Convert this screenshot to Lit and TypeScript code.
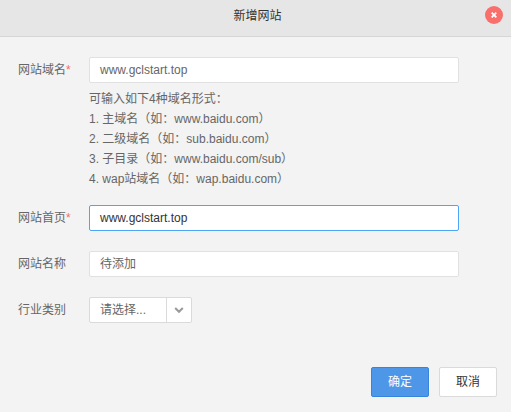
import { LitElement, html, css, nothing } from "lit";
import { customElement, property } from "lit/decorators.js";

@customElement("form-row")
class FormRow extends LitElement {
  @property() label = "";
  @property({ type: Boolean }) required = false;

  static styles = css`
    :host { display: flex; align-items: flex-start; }
    .label { flex: none; width: 71px; line-height: 26px; color: #666; white-space: nowrap; }
    .star { color: #f56c6c; }
    .control { flex: none; width: 370px; }
  `;

  render() {
    return html`
      <div class="label">${this.label}${this.required ? html`<span class="star">*</span>` : nothing}</div>
      <div class="control"><slot></slot></div>
    `;
  }
}

@customElement("app-root")
class AppRoot extends LitElement {
  static styles = css`
    :host {
      display: flex;
      flex-direction: column;
      box-sizing: border-box;
      height: 412px;
      background: #f3f3f3;
      font: 12px/20px "Liberation Sans", "Noto Sans CJK SC", sans-serif;
      color: #666;
      overflow: hidden;
    }
    * { box-sizing: border-box; }
    .header {
      position: relative;
      flex: none;
      height: 37px;
      padding-top: 6px;
      background: #e6e6e6;
      border-bottom: 1px solid #d6d6d6;
      color: #333;
      text-align: center;
      padding-right: -4px;
      text-indent: 4px;
    }
    .close {
      position: absolute;
      top: 6px;
      right: 8px;
      width: 18px;
      height: 18px;
      padding: 0;
      border: 0;
      background: none;
    }
    svg { display: block; }
    .form { flex: 1; padding: 20px 0 0 18px; }
    form-row + form-row { margin-top: 20px; }
    .input {
      width: 370px;
      height: 26px;
      display: block;
      margin: 0;
      padding: 0 10px;
      border: 1px solid #e1e1e1;
      border-radius: 2px;
      outline: 0;
      background: #fff;
      font: inherit;
      line-height: 24px;
      color: #666;
    }
    .active { border-color: #4fa5f5; color: #333; }
    .help { padding: 6px 0 2px; margin-bottom: -4px; height: 106px; white-space: nowrap; }
    .help + * { margin: 0; }
    .select {
      display: flex;
      width: 103px;
      height: 26px;
      border: 1px solid #dadada;
      border-radius: 2px;
      background: #fff;
      line-height: 24px;
    }
    .value { flex: 1; padding-left: 10px; }
    .arrow {
      width: 25px;
      border-left: 1px solid #dadada;
      display: flex;
      align-items: center;
      justify-content: center;
    }
    .footer { flex: none; display: flex; justify-content: flex-end; gap: 10px; padding: 0 14px 15px 0; }
    .button {
      width: 58px;
      height: 30px;
      padding: 0;
      border: 1px solid #dadada;
      border-radius: 2px;
      background: #fff;
      color: #333;
      font: inherit;
      line-height: 28px;
    }
    .primary { background: #4e97e8; border-color: #3585df; color: #fff; }
  `;

  render() {
    return html`
      <div class="header">
        新增网站
        <button class="close" aria-label="关闭">
          <svg width="18" height="18" viewBox="0 0 18 18">
            <circle cx="9" cy="9" r="9" fill="#f96f6b" />
            <path d="M6.7 6.7 11.3 11.3M11.3 6.7 6.7 11.3" stroke="#fff" stroke-width="1.8" />
          </svg>
        </button>
      </div>
      <div class="form">
        <form-row label="网站域名" required>
          <div class="input">www.gclstart.top</div>
          <div class="help">
            <div>可输入如下4种域名形式：</div>
            <div>1. 主域名（如：www.baidu.com）</div>
            <div>2. 二级域名（如：sub.baidu.com）</div>
            <div>3. 子目录（如：www.baidu.com/sub）</div>
            <div>4. wap站域名（如：wap.baidu.com）</div>
          </div>
        </form-row>
        <form-row label="网站首页" required>
          <div class="input active">www.gclstart.top</div>
        </form-row>
        <form-row label="网站名称">
          <div class="input">待添加</div>
        </form-row>
        <form-row label="行业类别">
          <div class="select">
            <div class="value">请选择...</div>
            <div class="arrow">
              <svg width="10" height="8" viewBox="0 0 10 8">
                <path d="M1.2 2 5 5.8 8.8 2" fill="none" stroke="#999" stroke-width="2" />
              </svg>
            </div>
          </div>
        </form-row>
      </div>
      <div class="footer">
        <button class="button primary">确定</button>
        <button class="button">取消</button>
      </div>
    `;
  }
}
